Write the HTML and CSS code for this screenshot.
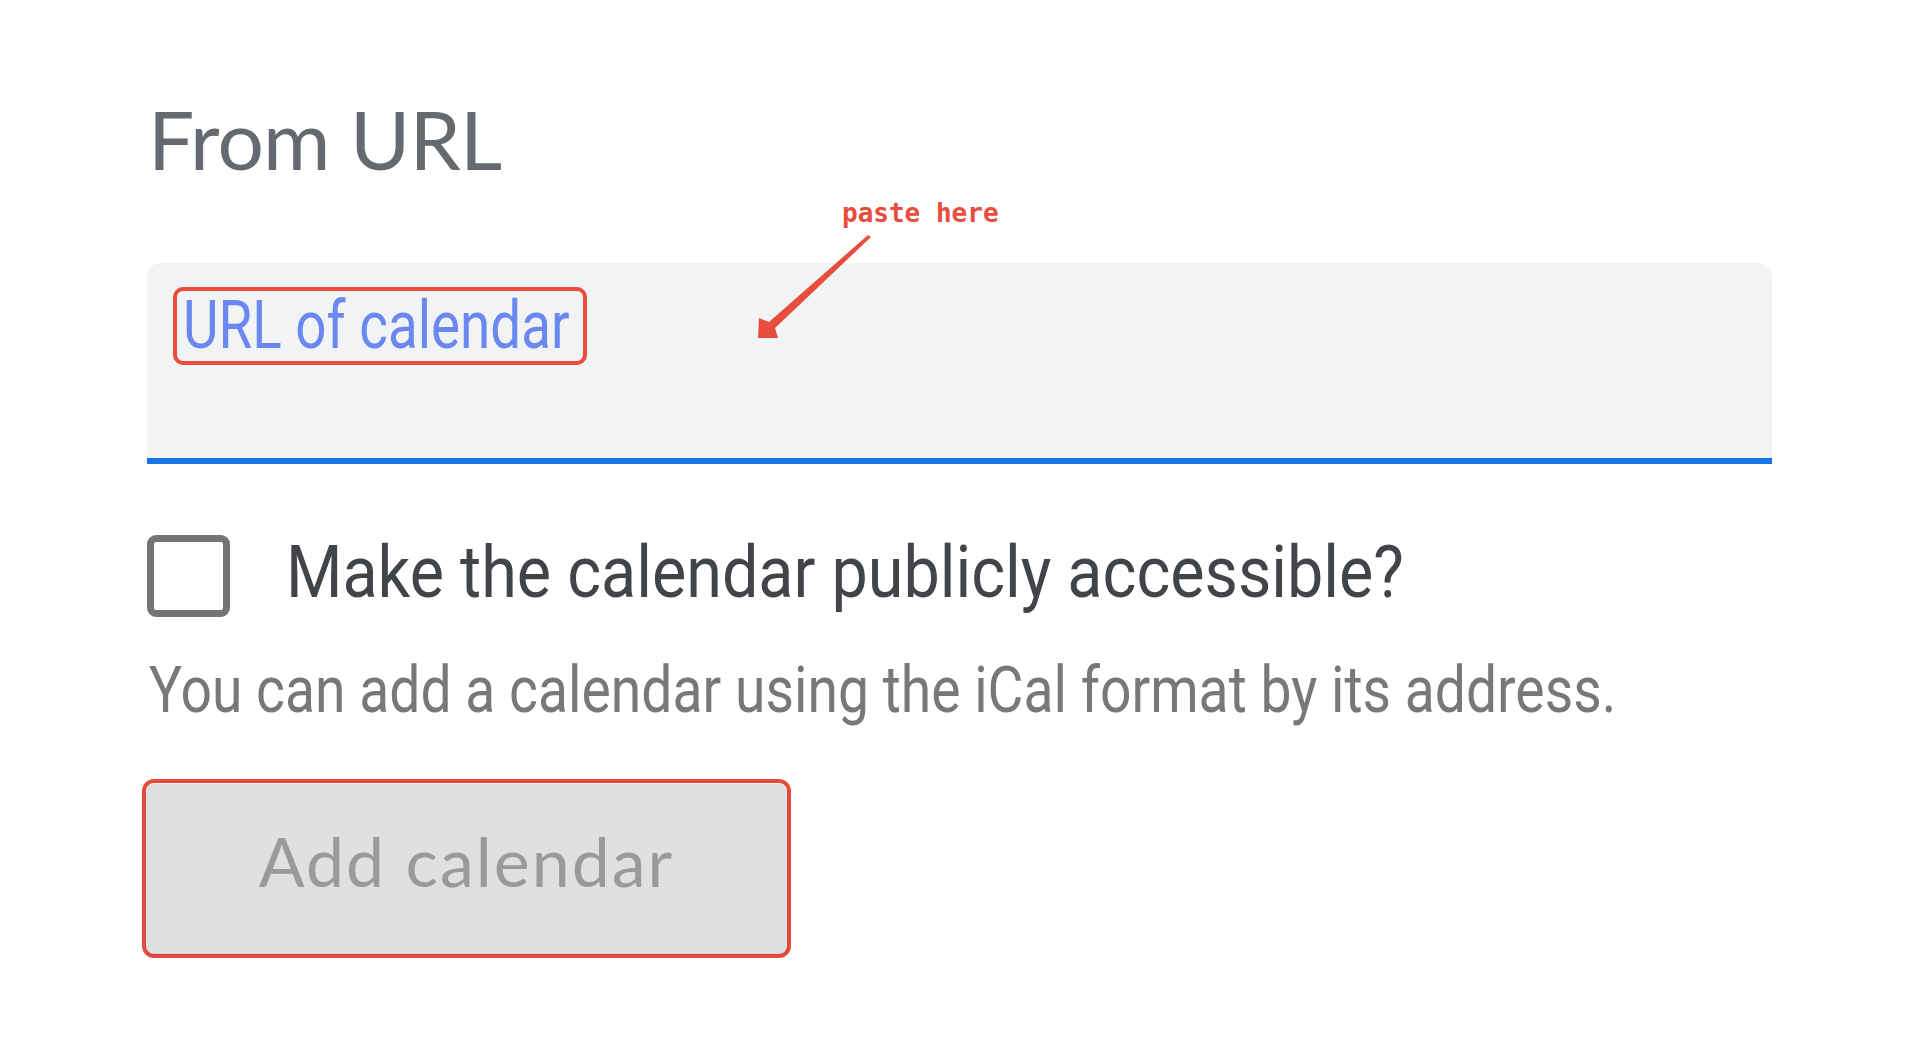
FILE: index.html
```html
<!DOCTYPE html>
<html lang="en">
<head>
<meta charset="utf-8">
<title>From URL</title>
<link rel="stylesheet" href="styles.css">
</head>
<body>
<main class="page">
  <h1 class="title">From URL</h1>
  <div class="field-wrap">
    <div class="field">
      <div class="highlight"><span class="placeholder">URL of calendar</span></div>
    </div>
    <span class="paste-label">paste here</span>
    <svg class="arrow" width="130" height="115" viewBox="0 0 130 115">
      <polygon points="118,5 121,7 25,98 28,108 8,108 9,88 19,92" fill="#e74c3c"/>
    </svg>
  </div>
  <label class="check-row">
    <span class="checkbox"></span>
    <span class="check-text">Make the calendar publicly accessible?</span>
  </label>
  <p class="help"><span class="help-text">You can add a calendar using the iCal format by its address.</span></p>
  <div class="btn-outline">
    <div class="btn">Add calendar</div>
  </div>
</main>
</body>
</html>
```
FILE: styles.css
```css
html, body {
  margin: 0;
  padding: 0;
  background: #ffffff;
}
body {
  font-family: Roboto, "Liberation Sans", sans-serif;
}
.page {
  padding: 97px 0 0 147px;
}
.title {
  margin: 0 0 0 1px;
  font-family: Lato, "Open Sans", sans-serif;
  font-weight: 400;
  font-size: 82px;
  line-height: 83px;
  height: 83px;
  letter-spacing: -0.8px;
  color: #646a70;
}
.field-wrap {
  position: relative;
  margin-top: 83px;
  width: 1625px;
}
.field {
  box-sizing: border-box;
  height: 201px;
  background: #f1f3f4;
  border-bottom: 6px solid #1a73e8;
  border-radius: 14px 14px 0 0;
  padding: 24px 0 0 26px;
}
.highlight {
  box-sizing: border-box;
  width: 414px;
  height: 78px;
  border: 4px solid #e74c3c;
  border-radius: 10px;
  padding: 2px 0 0 6px;
  white-space: nowrap;
}
.placeholder {
  display: inline-block;
  font-size: 66px;
  line-height: 66px;
  color: #6b87f0;
  transform: scaleX(0.83);
  transform-origin: left center;
}
.paste-label {
  position: absolute;
  left: 695px;
  top: -63px;
  font-family: "DejaVu Sans Mono", "Liberation Mono", monospace;
  font-weight: 700;
  font-size: 26px;
  line-height: 26px;
  color: #e74c3c;
  white-space: nowrap;
}
.arrow {
  position: absolute;
  left: 603px;
  top: -33px;
}
.check-row {
  display: flex;
  align-items: flex-start;
  margin-top: 71px;
}
.checkbox {
  box-sizing: border-box;
  width: 83px;
  height: 82px;
  border: 7px solid #757575;
  border-radius: 9px;
  flex: none;
}
.check-text {
  display: inline-block;
  margin: 2px 0 0 56px;
  font-size: 72px;
  line-height: 72px;
  color: #414549;
  white-space: nowrap;
  transform: scaleX(0.898);
  transform-origin: left center;
}
.help {
  margin: 41px 0 0 2px;
  font-size: 65px;
  line-height: 65px;
  height: 65px;
  color: #787878;
  white-space: nowrap;
}
.help-text {
  display: inline-block;
  transform: scaleX(0.85);
  transform-origin: left center;
}
.btn-outline {
  box-sizing: border-box;
  margin: 56px 0 0 -5px;
  width: 649px;
  height: 179px;
  border: 4px solid #e74c3c;
  border-radius: 12px;
  padding: 1px;
}
.btn {
  box-sizing: border-box;
  height: 169px;
  background: #e0e0e0;
  border-radius: 7px;
  box-shadow: 0 1px 3px rgba(0, 0, 0, 0.25);
  font-family: Lato, "Open Sans", sans-serif;
  font-size: 68px;
  line-height: 68px;
  letter-spacing: 2px;
  color: #9a9a9a;
  text-align: center;
  padding-top: 43px;
}
```
